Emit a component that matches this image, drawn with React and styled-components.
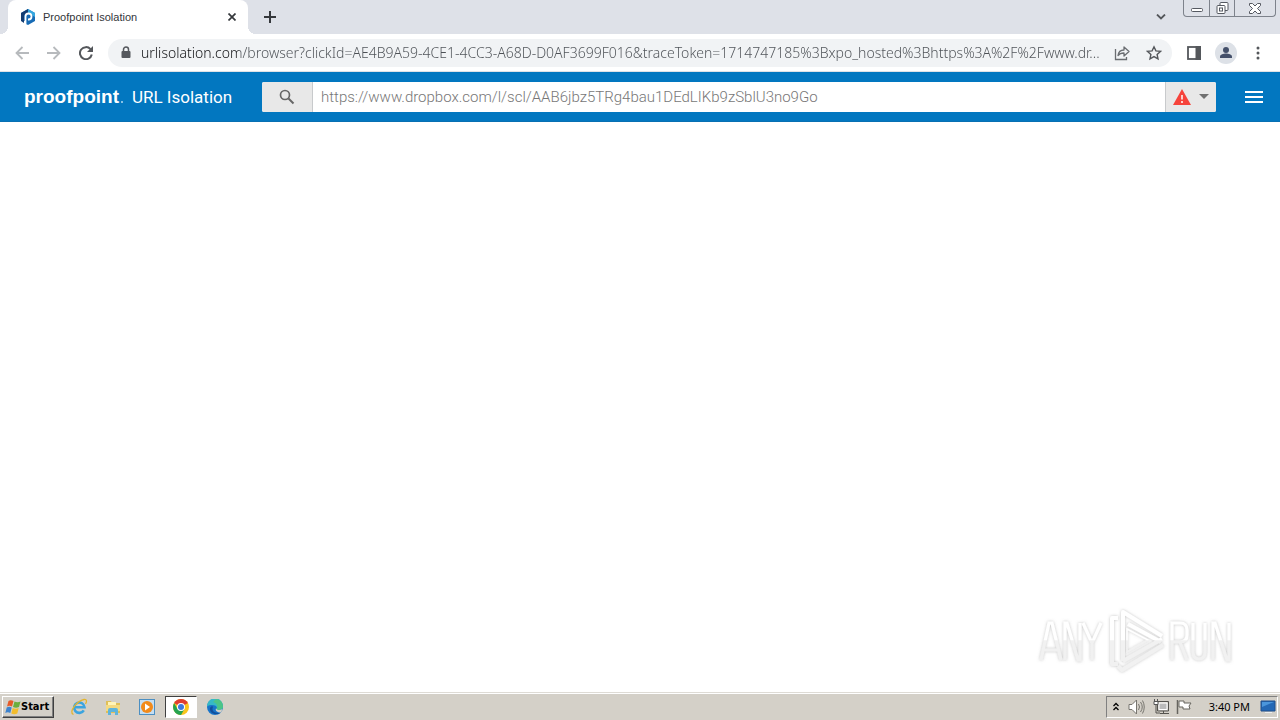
import React from "react";
import styled, { createGlobalStyle } from "styled-components";

const GlobalStyle = createGlobalStyle`
  * { box-sizing: border-box; }
  body { margin: 0; background: #fff; font-family: "Noto Sans", sans-serif; }
  button, input { font: inherit; margin: 0; }
  svg { display: block; }
`;

const Screen = styled.div`
  min-height: 100vh;
  display: flex;
  flex-direction: column;
`;

const TabStrip = styled.header`
  display: flex;
  height: 34px;
  padding-left: 8px;
  background: #dee1e8;
`;

const Tab = styled.div`
  position: relative;
  display: flex;
  align-items: center;
  width: 240px;
  padding: 0 8px 0 12px;
  gap: 7px;
  background: #fff;
  border-radius: 8px 8px 0 0;

  &::before,
  &::after {
    content: "";
    position: absolute;
    bottom: 0;
    width: 8px;
    height: 8px;
  }
  &::before {
    right: 100%;
    background: radial-gradient(circle at 0 0, transparent 8px, #fff 8px);
  }
  &::after {
    left: 100%;
    background: radial-gradient(circle at 100% 0, transparent 8px, #fff 8px);
  }
`;

const TabTitle = styled.span`
  flex: 1;
  font-family: "Liberation Sans", sans-serif;
  font-size: 11px;
  line-height: 16px;
  color: #33363a;
  white-space: nowrap;
`;

const IconButton = styled.button`
  display: flex;
  align-items: center;
  justify-content: center;
  flex: none;
  width: ${(p) => p.$w || 32}px;
  height: ${(p) => p.$h || 32}px;
  padding: 0;
  border: 0;
  background: ${(p) => p.$bg || "transparent"};
  color: ${(p) => p.$color || "#54575b"};
`;

const Spacer = styled.div`
  flex: 1;
`;

const WindowButtons = styled.div`
  display: flex;
  height: 17px;
  margin: 0 4px 0 6px;
  border: 1px solid #7d828b;
  border-top: 0;
  border-radius: 0 0 4px 4px;
  overflow: hidden;
  button + button { border-left: 1px solid #7d828b; }
`;

const Toolbar = styled.nav`
  display: flex;
  align-items: center;
  height: 38px;
  padding: 0 6px;
  background: #fff;
  border-bottom: 1px solid #dfe2e6;
`;

const Omnibox = styled.div`
  display: flex;
  align-items: center;
  flex: 1;
  min-width: 0;
  height: 28px;
  margin: 0 6px;
  padding: 0 2px 0 12px;
  border-radius: 14px;
  background: #f1f3f5;
`;

const Address = styled.input`
  flex: 1;
  min-width: 0;
  margin-left: 9px;
  padding: 0;
  border: 0;
  outline: 0;
  font-family: "Noto Sans", sans-serif;
  font-size: 14px;
  font-weight: 300;
  line-height: 20px;
  color: transparent;
  background: linear-gradient(to right, #101114 98px, #4d5156 98px);
  background-clip: text;
  -webkit-background-clip: text;
`;

const AppBar = styled.div`
  display: flex;
  align-items: center;
  height: 50px;
  padding: 0 9px 0 24px;
  background: #0277c0;
  border-bottom: 1px solid #0870b2;
`;

const Logo = styled.span`
  display: flex;
  align-items: baseline;
  width: 101px;
  font-family: "Liberation Sans", sans-serif;
  font-size: 19px;
  font-weight: 700;
  line-height: 24px;
  color: #fff;
`;

const LogoDot = styled.i`
  width: 2px;
  height: 2px;
  margin-left: 2px;
  border-radius: 50%;
  background: #b5daf0;
`;

const Product = styled.span`
  width: 98px;
  margin: 0 32px 0 7px;
  font-family: Roboto, sans-serif;
  font-size: 17px;
  line-height: 24px;
  color: #fff;
  white-space: nowrap;
`;

const Search = styled.form`
  display: flex;
  flex: 1;
  min-width: 0;
  height: 30px;
  margin-right: 21px;
  border-radius: 2px;
  overflow: hidden;
  background: #fff;
`;

const SearchInput = styled.input`
  flex: 1;
  min-width: 0;
  padding: 0 8px;
  border: solid #c8cacc;
  border-width: 0 1px;
  outline: 0;
  font-family: Roboto, sans-serif;
  font-size: 15px;
  font-weight: 300;
  line-height: 20px;
  color: #777;
  background: #fff;
`;

const RiskButton = styled(IconButton)`
  gap: 8px;
`;

const Page = styled.main`
  flex: 1;
  display: flex;
  align-items: flex-end;
  justify-content: flex-end;
  padding: 0 40px 16px;
  background: #fff;
`;

const Taskbar = styled.footer`
  display: flex;
  align-items: center;
  height: 28px;
  padding: 1px 2px;
  background: #d4d0c8;
  border-top: 1px solid #dedbd5;
  box-shadow: inset 0 1px #fff;
`;

const StartButton = styled.button`
  display: flex;
  align-items: center;
  width: 52px;
  height: 22px;
  padding: 0 0 0 2px;
  border: 1px solid;
  border-color: #fff #404040 #404040 #fff;
  box-shadow: inset -1px -1px #808080;
  background: #d4d0c8;
  && { font: 700 11px/16px "DejaVu Sans Condensed", "DejaVu Sans", sans-serif; }
  color: #000;
`;

const Pins = styled.div`
  display: flex;
  gap: 2px;
  margin-left: 9px;
`;

const Pin = styled.button`
  display: flex;
  align-items: center;
  justify-content: center;
  width: 32px;
  height: 22px;
  padding: 0;
  border: 1px solid;
  border-color: ${(p) => (p.$active ? "#404040 #fff #fff #404040" : "transparent")};
  background: ${(p) => (p.$active ? "#fff" : "transparent")};
`;

const Tray = styled.div`
  display: flex;
  align-items: center;
  height: 22px;
  padding: 0 1px 0 4px;
  border: 1px solid;
  border-color: #808080 #fff #fff #808080;
`;

const Clock = styled.time`
  margin: 0 10px 0 11px;
  font-size: 11px;
  line-height: 16px;
  color: #000;
  white-space: nowrap;
`;

const Glyph = ({ w = 16, h = w, box = `0 0 ${w} ${h}`, children, ...rest }) => (
  <svg width={w} height={h} viewBox={box} fill="none" aria-hidden="true" {...rest}>
    {children}
  </svg>
);

const Stroke = ({ d, w = 2, ...rest }) => <path d={d} stroke="currentColor" strokeWidth={w} {...rest} />;

function Favicon() {
  return (
    <Glyph>
      <path d="M8 0l7 4v8l-7 4-3-1.500V12L1 12V4z" fill="#176bb5" />
      <path d="M1 4l7-4v4L4 6v8l-3-2z" fill="#123c73" />
      <path d="M8 0l7 4v4L8 4z" fill="#35a7df" />
      <path d="M5.500 15V7.500a3 3 0 1 1 3 3H8" stroke="#fff" strokeWidth="1.800" />
    </Glyph>
  );
}

function Watermark() {
  return (
    <svg width="204" height="72" viewBox="0 0 204 72" role="img" aria-label="ANY RUN">
      <defs>
        <filter id="soft" x="-10%" y="-10%" width="120%" height="120%">
          <feDropShadow dx="0" dy="0" stdDeviation="1.800" floodColor="#888" floodOpacity="0.500" />
        </filter>
        <linearGradient id="fade" x1="0" y1="0" x2="0" y2="72" gradientUnits="userSpaceOnUse">
          <stop offset="0.500" stopColor="#fff" />
          <stop offset="0.510" stopColor="#f1f1f1" />
        </linearGradient>
      </defs>
      <g filter="url(#soft)" fill="none" stroke="url(#fade)" strokeWidth="3.200">
        <path d="M5 56L13 19h3l9 37M8 46h14M29 56V19h2l11 37h2V19M47 19l9 20v17M56 39l9-20" />
        <path d="M136 56V19h8q7 0 7 7v5q0 7-7 7h-8M144 38l7 18M157 19v29q0 7 6 7t6-7V19M177 56V19h2l12 37h2V19" />
        <path d="M87 57V8l39 24M92 20l33 18M82 14h-6v46h6M87 57l39-22M82 62l4 4 41-25" strokeWidth="4" strokeLinejoin="round" />
        <path d="M91 25l21 11-21 12z" strokeWidth="1.500" />
      </g>
    </svg>
  );
}

export default function App() {
  return (
    <Screen>
      <GlobalStyle />
      <TabStrip>
        <Tab>
          <Favicon />
          <TabTitle>Proofpoint Isolation</TabTitle>
          <IconButton $w={16} $h={16} $color="#35383c" aria-label="Close tab">
            <Glyph w={8}><Stroke d="M.5.5l7 7M7.500.5l-7 7" w={1.7} /></Glyph>
          </IconButton>
        </Tab>
        <IconButton $w={44} $h={34} $color="#35383c" aria-label="New tab">
          <Glyph w={12}><Stroke d="M6 0v12M0 6h12" /></Glyph>
        </IconButton>
        <Spacer />
        <IconButton $w={32} $h={34} aria-label="Search tabs">
          <Glyph w={10} h={6}><Stroke d="M1 .5l4 4 4-4" w={1.8} /></Glyph>
        </IconButton>
        <WindowButtons>
          <IconButton $w={25} $h={16} aria-label="Minimize">
            <Glyph w={12} h={12}><rect x=".5" y="6.500" width="11" height="3" rx="1" fill="#fff" stroke="#555961" /></Glyph>
          </IconButton>
          <IconButton $w={25} $h={16} aria-label="Restore">
            <Glyph w={13} h={13} stroke="#555961">
              <rect x="4" y=".5" width="8" height="8" rx="1" fill="#fff" />
              <rect x="1" y="3.500" width="8" height="8" rx="1" fill="#fff" />
              <rect x="3.500" y="6" width="3" height="3" />
            </Glyph>
          </IconButton>
          <IconButton $w={41} $h={16} aria-label="Close">
            <Glyph w={12} h={11}>
              <path d="M.5.5h3L6 3 8.500.5h3v2l-3 3 3 3v2h-3L6 8l-2.500 2.500h-3v-2l3-3-3-3z" fill="#fff" stroke="#555961" />
            </Glyph>
          </IconButton>
        </WindowButtons>
      </TabStrip>

      <Toolbar>
        <IconButton $color="#b7babd" aria-label="Back">
          <Glyph w={14}><Stroke d="M14 7H1.500M7.500 1l-6 6 6 6" w={1.8} /></Glyph>
        </IconButton>
        <IconButton $color="#b7babd" aria-label="Forward">
          <Glyph w={14}><Stroke d="M0 7h12.500M6.500 1l6 6-6 6" w={1.8} /></Glyph>
        </IconButton>
        <IconButton aria-label="Reload">
          <Glyph w={14}>
            <Stroke d="M11.500 3.200A6 6 0 1 0 12.800 8.500" />
            <path d="M14 0v6H8z" fill="currentColor" />
          </Glyph>
        </IconButton>
        <Omnibox>
          <Glyph w={12} h={14}>
            <rect x="1.500" y="5" width="9" height="7" rx="1" fill="#55585d" />
            <path d="M3.500 5V3.500a2.500 2.500 0 0 1 5 0V5" stroke="#55585d" strokeWidth="1.500" />
          </Glyph>
          <Address
            aria-label="Address"
            readOnly
            value="urlisolation.com/browser?clickId=AE4B9A59-4CE1-4CC3-A68D-D0AF3699F016&traceToken=1714747185%3Bxpo_hosted%3Bhttps%3A%2F%2Fwww.dr..."
          />
          <IconButton aria-label="Share">
            <Glyph w={16} stroke="#6a6d71" strokeWidth="1.300">
              <path d="M1.500 4v10.500h11V12" />
              <path d="M4 10.500c.5-4 3-5.500 6-5.500V2l5 4.500-5 4.500V8C7.500 8 5.500 8.500 4 10.500z" strokeLinejoin="round" />
            </Glyph>
          </IconButton>
          <IconButton aria-label="Bookmark">
            <Glyph w={16}>
              <Stroke d="M8 1.800l1.900 4.100 4.500.5-3.300 3 .9 4.400L8 11.600l-4 2.200.9-4.400-3.300-3 4.500-.5z" w={1.4} />
            </Glyph>
          </IconButton>
        </Omnibox>
        <IconButton aria-label="Side panel">
          <Glyph w={14}>
            <rect x="1" y="1" width="12" height="12" stroke="currentColor" strokeWidth="1.800" />
            <path d="M8.500 0H14v14H8.500z" fill="currentColor" />
          </Glyph>
        </IconButton>
        <IconButton aria-label="Profile">
          <Glyph w={22}>
            <circle cx="11" cy="11" r="11" fill="#dde1e7" />
            <circle cx="11" cy="8" r="3" fill="#44506a" />
            <path d="M5 16v-1.500c0-2 3.500-3 6-3s6 1 6 3V16z" fill="#44506a" />
          </Glyph>
        </IconButton>
        <IconButton aria-label="Menu">
          <Glyph w={4} h={14}>
            <circle cx="2" cy="2" r="1.500" fill="currentColor" />
            <circle cx="2" cy="7" r="1.500" fill="currentColor" />
            <circle cx="2" cy="12" r="1.500" fill="currentColor" />
          </Glyph>
        </IconButton>
      </Toolbar>

      <AppBar>
        <Logo>proofpoint<LogoDot /></Logo>
        <Product>URL Isolation</Product>
        <Search onSubmit={(e) => e.preventDefault()}>
          <IconButton $w={50} $h={30} $bg="#e8e8e8" $color="#666" aria-label="Search">
            <Glyph w={16}>
              <circle cx="6" cy="6" r="4.500" stroke="currentColor" strokeWidth="1.700" />
              <Stroke d="M9.500 9.500l5 5" w={2} />
            </Glyph>
          </IconButton>
          <SearchInput aria-label="Page URL" readOnly value="https://www.dropbox.com/l/scl/AAB6jbz5TRg4bau1DEdLIKb9zSblU3no9Go" />
          <RiskButton type="button" $w={50} $h={30} $bg="#e8e8e8" aria-label="Risk details">
            <Glyph w={18} h={16}>
              <path d="M9 0l9 16H0z" fill="#f6433b" />
              <path d="M9 6v4.500M9 12v2" stroke="#fff" strokeWidth="1.500" />
            </Glyph>
            <Glyph w={10} h={5}><path d="M0 0h10L5 5z" fill="#707070" /></Glyph>
          </RiskButton>
        </Search>
        <IconButton $w={34} $color="#fff" aria-label="Open menu">
          <Glyph w={18} h={12}><Stroke d="M0 1h18M0 6h18M0 11h18" /></Glyph>
        </IconButton>
      </AppBar>

      <Page><Watermark /></Page>

      <Taskbar>
        <StartButton>
          <Glyph w={16}>
            <path d="M3.500 2q2-1.500 5 0L7 7.500Q4.500 6 2 7.500z" fill="#e65a28" />
            <path d="M9.500 2.500q3 1.500 6 0L14 8Q11 9.500 8 8z" fill="#6cae3e" />
            <path d="M1.700 8.500Q4.200 7 6.700 8.500L5.300 14q-2.600-1.500-5 0z" fill="#3d83ce" />
            <path d="M7.700 9q3 1.500 6 0L12.300 14.500q-3 1.500-6 0z" fill="#f3bd2d" />
          </Glyph>
          Start
        </StartButton>
        <Pins>
          <Pin aria-label="Internet Explorer">
            <Glyph w={18}>
              <path d="M13.800 12.300a5.200 5.200 0 1 1 .7-3H5" stroke="#3ba4df" strokeWidth="2.600" />
              <path d="M3.500 16.500C-2 14 7 3 14 1.500c3-.5 3 2 1.500 4.500" stroke="#e4b52e" strokeWidth="1.300" />
            </Glyph>
          </Pin>
          <Pin aria-label="Explorer">
            <Glyph w={16}>
              <path d="M1 2h5l1 2h8v10H1z" fill="#dfbf58" />
              <path d="M3 3h8v5H3z" fill="#fff4b8" />
              <path d="M1 6h14v6H1z" fill="#f4da82" />
              <path d="M3 16v-5q0-2 2-2h6q2 0 2 2v5h-3v-3H6v3z" fill="#5eb4dc" />
            </Glyph>
          </Pin>
          <Pin aria-label="Media Player">
            <Glyph w={16}>
              <rect x=".5" y=".5" width="15" height="15" fill="#c5def2" stroke="#4c8fc2" />
              <circle cx="8" cy="8" r="6" fill="#f28a1a" />
              <path d="M6 4.500l5 3.500-5 3.500z" fill="#fff" />
            </Glyph>
          </Pin>
          <Pin $active aria-label="Chrome">
            <Glyph w={16}>
              <circle cx="8" cy="8" r="8" fill="#f9c51d" />
              <path d="M8 8L1.100 4A8 8 0 0 1 14.900 4z" fill="#df3e31" />
              <path d="M1.100 4A8 8 0 0 0 8 16l3.500-6H4.500z" fill="#25a350" />
              <circle cx="8" cy="8" r="4" fill="#fff" />
              <circle cx="8" cy="8" r="3" fill="#3c79de" />
            </Glyph>
          </Pin>
          <Pin aria-label="Edge">
            <Glyph w={16}>
              <circle cx="8" cy="8" r="8" fill="#1874c9" />
              <path d="M0 7.500a8 8 0 0 1 16-.5c0 3-2 4-5 4-2 0-2-1-1-2 0-3-6-4-10-1.500z" fill="#36b9c6" />
              <path d="M9 .1A8 8 0 0 1 16 7c0 3-2 4-5 4-2 0-2-1-1-2 1-3-1-5-4-6z" fill="#4cc487" />
              <path d="M6 8c-2 4 2 7 8 5.500C9 17 2 14 3 9c1-2 3-2 3-1z" fill="#124f9c" />
              <path d="M9 9.500c1.500 2 4 2 6.500.5L14 13.500c-4 0-6-2-5-4z" fill="#d4d0c8" />
            </Glyph>
          </Pin>
        </Pins>
        <Spacer />
        <Tray>
          <IconButton $w={10} $h={20} $color="#000" aria-label="Show hidden icons">
            <Glyph w={6} h={9}><Stroke d="M.5 4L3 1.500 5.500 4M.5 8L3 5.500 5.500 8" w={1.3} /></Glyph>
          </IconButton>
          <IconButton $w={31} $h={20} $color="#77756f" aria-label="Volume">
            <Glyph w={17} h={16}>
              <path d="M1 5.500h3L8.500 1v14L4 10.500H1z" fill="#fff" stroke="currentColor" />
              <Stroke d="M10.500 5q2 3 0 6M12.500 3q3.500 5 0 10M14.500 1.500q3.500 6.500 0 13" w={1} />
            </Glyph>
          </IconButton>
          <IconButton $w={18} $h={20} $color="#55534e" aria-label="Network">
            <Glyph w={16}>
              <rect x="5.500" y="4.500" width="9" height="7" fill="#bbb" />
              <Stroke d="M4.500 2.500h11v9.500h-11zM7 14.500h9M10.500 12v2M3 5v9h4" w={1} />
              <path d="M6 4h8v6.500H6z" stroke="#fff" />
              <path d="M1 2.500h4v3H1zM1.500 0v2M4.500 0v2" fill="#fff" stroke="#555" />
            </Glyph>
          </IconButton>
          <IconButton $w={28} $h={20} $color="#66645f" aria-label="Action center">
            <Glyph w={16}>
              <path d="M3 2h5v2h7l-2 3 1 3H7V8H3z" fill="#fff" stroke="currentColor" />
              <Stroke d="M1.500 1v14" w={1.5} />
            </Glyph>
          </IconButton>
          <Clock>3:40 PM</Clock>
          <IconButton $w={16} $h={20} aria-label="Show desktop">
            <Glyph w={16} h={14}>
              <path d="M1 1h14v10H1z" fill="#2468b5" stroke="#204f8a" />
              <path d="M2 2h12L2 7z" fill="#4b96dc" />
              <path d="M5 12h7v1H5z" fill="#eee" />
            </Glyph>
          </IconButton>
        </Tray>
      </Taskbar>
    </Screen>
  );
}
